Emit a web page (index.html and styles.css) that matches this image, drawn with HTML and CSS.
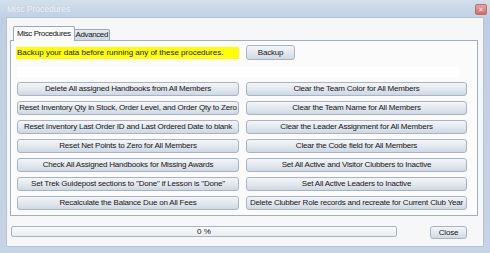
FILE: index.html
```html
<!DOCTYPE html>
<html lang="en">
<head>
    <meta charset="UTF-8">
    <title>Misc Procedures</title>
    <link rel="stylesheet" href="styles.css">
</head>
<body>
    <div class="window">
        <div class="titlebar">
            <span class="title">Misc Procedures</span>
            <span class="close-x">&#x2715;</span>
        </div>
        <div class="client">
            <div class="tabs">
                <div class="tab active">Misc Procedures</div>
                <div class="tab">Advanced</div>
            </div>
            <div class="panel">
                <div class="backup-row">
                    <div class="warning">Backup your data before running any of these procedures.</div>
                    <button class="btn backup">Backup</button>
                </div>
                <div class="status-box"></div>
                <div class="grid">
                    <button class="btn">Delete All assigned Handbooks from All Members</button>
                    <button class="btn">Clear the Team Color for All Members</button>
                    <button class="btn">Reset Inventory Qty in Stock, Order Level, and Order Qty to Zero</button>
                    <button class="btn">Clear the Team Name for All Members</button>
                    <button class="btn">Reset Inventory Last Order ID and Last Ordered Date to blank</button>
                    <button class="btn">Clear the Leader Assignment for All Members</button>
                    <button class="btn">Reset Net Points to Zero for All Members</button>
                    <button class="btn">Clear the Code field for All Members</button>
                    <button class="btn">Check All Assigned Handbooks for Missing Awards</button>
                    <button class="btn">Set All Active and Visitor Clubbers to Inactive</button>
                    <button class="btn">Set Trek Guidepost sections to "Done" if Lesson is "Done"</button>
                    <button class="btn">Set All Active Leaders to Inactive</button>
                    <button class="btn">Recalculate the Balance Due on All Fees</button>
                    <button class="btn">Delete Clubber Role records and recreate for Current Club Year</button>
                </div>
            </div>
            <div class="footer">
                <div class="progress">0 %</div>
                <button class="btn close">Close</button>
            </div>
        </div>
    </div>
</body>
</html>
```

FILE: styles.css
```css
body {
    margin: 0;
    font-family: "Liberation Sans", Arial, sans-serif;
    font-size: 8px;
    color: #161616;
}

.window {
    width: 490px;
    height: 253px;
    box-sizing: border-box;
    background: linear-gradient(#d3dfec, #bfcfe2 20px, #c6d4e5);
    padding: 0 6px 6px 6px;
    display: flex;
    flex-direction: column;
}

.titlebar {
    height: 17px;
    display: flex;
    align-items: center;
    justify-content: space-between;
}

.title {
    color: #f1f4f8;
    font-size: 8.5px;
    margin-left: 1px;
    text-shadow: 0 0 2px #b3c3d6;
}

.close-x {
    width: 12px;
    height: 11px;
    margin-right: -3px;
    margin-top: 2px;
    background: linear-gradient(#e7a5a3, #d06b68);
    border: 1px solid #b7706f;
    border-radius: 2px;
    color: #f6dede;
    font-size: 7px;
    text-align: center;
    line-height: 9px;
    box-sizing: border-box;
}

.client {
    flex: 1;
    background: #f6f7f9;
    border: 1px solid #b4c3d5;
    padding: 7px 5px 0 3px;
}

.tabs {
    display: flex;
    align-items: flex-end;
    height: 15px;
    padding-left: 3px;
}

.tab {
    border: 1px solid #9aa8b8;
    border-bottom: none;
    padding: 0 1px;
    height: 10px;
    line-height: 10px;
    letter-spacing: -0.4px;
    background: linear-gradient(#e4e9ef, #cfd8e3);
    border-radius: 2px 2px 0 0;
}

.tab.active {
    height: 14px;
    line-height: 14px;
    padding: 0 3px;
    background: #fbfbfc;
    position: relative;
    top: 1px;
    margin-right: -1px;
    z-index: 1;
}

.panel {
    border: 1px solid #a3afbd;
    background: #fbfbfc;
    height: 176px;
    box-sizing: border-box;
    padding: 4px 10px 0 6px;
}

.backup-row {
    display: flex;
    align-items: center;
    gap: 7px;
}

.warning {
    width: 223px;
    height: 12px;
    line-height: 12px;
    background: #ffff00;
    margin-left: -1px;
    padding-left: 1px;
    box-sizing: border-box;
}

.btn {
    font: inherit;
    letter-spacing: -0.2px;
    color: #161616;
    border: 1px solid #a9b4c2;
    border-radius: 3px;
    background: linear-gradient(#f3f5f8, #e5eaf0 45%, #cfd8e3);
    padding: 0;
    height: 14px;
    line-height: 12px;
    white-space: nowrap;
    overflow: hidden;
}

.btn.backup {
    width: 49px;
    height: 15px;
}

.status-box {
    height: 10px;
    width: 442px;
    background: #ffffff;
    margin-top: 7px;
}

.grid {
    display: grid;
    grid-template-columns: 222px 221px;
    column-gap: 7px;
    row-gap: 5px;
    margin-top: 5px;
}

.footer {
    display: flex;
    align-items: flex-start;
    margin-top: 10px;
    padding-left: 1px;
}

.progress {
    width: 386px;
    height: 11px;
    box-sizing: border-box;
    border: 1px solid #aab4c0;
    border-radius: 2px;
    background: linear-gradient(#f9fafb, #e9edf2);
    text-align: center;
    line-height: 9px;
}

.btn.close {
    width: 37px;
    height: 13px;
    margin-left: 33px;
}
```
